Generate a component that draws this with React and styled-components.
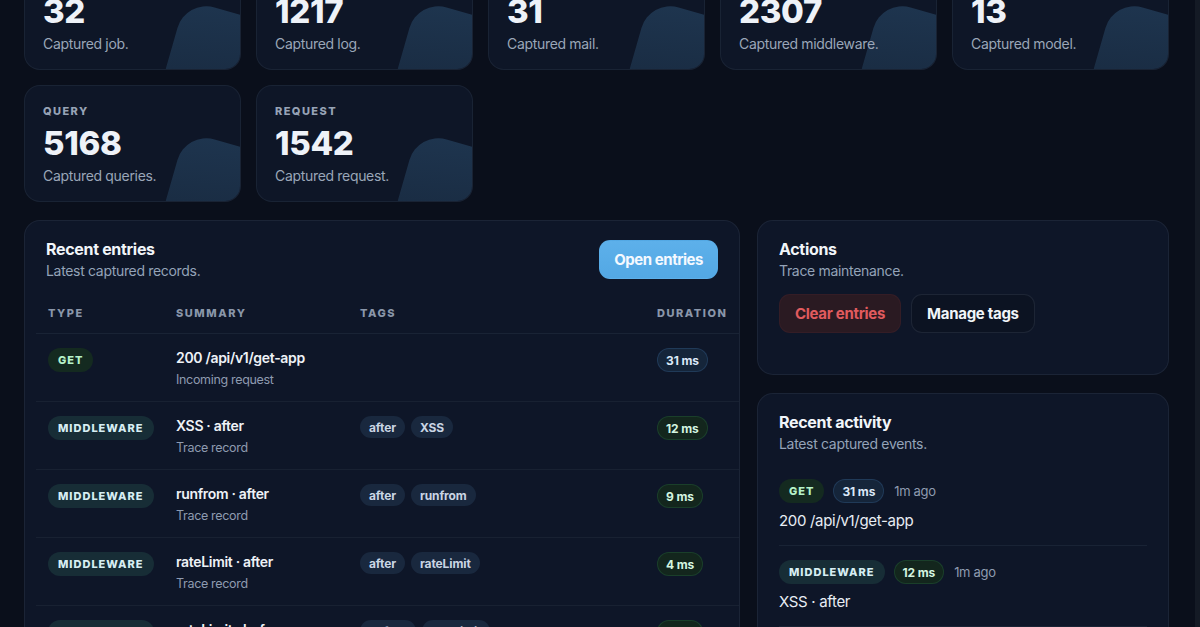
import React from "react";
import styled, { createGlobalStyle } from "styled-components";

const GlobalStyle = createGlobalStyle`
  html {
    margin: 0;
    overflow: hidden;
    background: linear-gradient(to left, #141a25 5px, #0a0f1b 5px);
  }
  body {
    margin: 0;
    overflow: hidden;
    background: transparent;
    font-family: Inter, "Noto Sans", sans-serif;
    letter-spacing: -0.02em;
    color: #e2e8f0;
  }
  * { box-sizing: border-box; }
`;

const Page = styled.div`
  display: flex;
  flex-direction: column;
  gap: 18px;
  padding: 0 31px 24px 24px;
  margin-top: -47px;
`;

const StatsGrid = styled.div`
  display: grid;
  grid-template-columns: repeat(5, minmax(0, 1fr));
  gap: 15px;
`;

const StatCard = styled.div`
  position: relative;
  overflow: hidden;
  padding: 17px 18px 15px;
  border-radius: 16px;
  background: #0e1627;
  border: 1px solid rgba(148, 163, 184, 0.09);
`;

const StatLabel = styled.div`
  font-size: 11px;
  font-weight: 800;
  letter-spacing: 0.13em;
  line-height: 16px;
  color: #97a3b6;
  margin-bottom: 4px;
  position: relative;
`;

const StatValue = styled.div`
  font-size: 33px;
  font-weight: 800;
  letter-spacing: -0.01em;
  line-height: 40px;
  color: #eef2f8;
  position: relative;
`;

const StatCaption = styled.div`
  margin-top: 3px;
  font-size: 14px;
  line-height: 20px;
  color: #9aa6b8;
  position: relative;
`;

const Blob = styled.span`
  position: absolute;
  right: -30px;
  bottom: -42px;
  width: 100px;
  height: 100px;
  border-radius: 30px;
  background: linear-gradient(170deg, #1e354f 0%, #1a2d44 60%, #172940 100%);
  transform: rotate(16deg);
`;

const MainGrid = styled.div`
  display: grid;
  grid-template-columns: minmax(0, 1fr) 412px;
  gap: 17px;
  align-items: start;
`;

const Panel = styled.section`
  background: #0e1628;
  border: 1px solid rgba(148, 163, 184, 0.1);
  border-radius: 16px;
  padding: ${(p) => p.$pad || "17px 21px 21px"};
  overflow: hidden;
`;

const PanelHeader = styled.div`
  display: flex;
  justify-content: space-between;
  align-items: flex-start;
  padding: ${(p) => p.$pad || "0"};
`;

const PanelTitle = styled.h2`
  margin: 0;
  font-size: 16px;
  font-weight: 700;
  line-height: 22px;
  color: #f1f5f9;
`;

const PanelSub = styled.p`
  margin: 1px 0 0;
  font-size: 14px;
  line-height: 20px;
  color: #94a3b8;
`;

const Button = styled.button`
  height: 39px;
  padding: 0 15px;
  border-radius: 11px;
  font-family: inherit;
  font-size: 15px;
  font-weight: 700;
  letter-spacing: -0.02em;
  cursor: pointer;
  border: 1px solid transparent;
  ${(p) =>
    p.$variant === "primary" &&
    `
    background: linear-gradient(180deg, #5db0ea, #53a8e4);
    color: #f4f9ff;
    margin-top: 2px;
    padding: 0 14px;
    letter-spacing: -0.03em;
  `}
  ${(p) =>
    p.$variant === "danger" &&
    `
    background: #2a1a22;
    color: #e15b5e;
    border-color: rgba(225, 91, 94, 0.06);
  `}
  ${(p) =>
    p.$variant === "ghost" &&
    `
    background: #0c1322;
    color: #f1f5f9;
    border-color: rgba(148, 163, 184, 0.13);
  `}
`;

const TableWrap = styled.div`
  padding-left: 11px;
  margin-top: 12px;
`;

const Table = styled.table`
  width: 100%;
  border-collapse: collapse;
  table-layout: fixed;
`;

const Th = styled.th`
  text-align: left;
  padding: 12px 12px;
  font-size: 11px;
  line-height: 16px;
  font-weight: 800;
  letter-spacing: 0.14em;
  color: #8a96aa;
  white-space: nowrap;
  border-bottom: 1px solid rgba(148, 163, 184, 0.09);
`;

const Tr = styled.tr`
  border-bottom: 1px solid rgba(148, 163, 184, 0.08);
`;

const Td = styled.td`
  vertical-align: top;
  padding: 14px 12px 12px;
`;

const TypeBadge = styled.span`
  display: inline-flex;
  align-items: center;
  height: 24px;
  padding: 0 10px;
  border-radius: 999px;
  font-size: 11px;
  font-weight: 800;
  letter-spacing: 0.09em;
  white-space: nowrap;
  background: ${(p) => (p.$kind === "get" ? "#142a20" : "#172d36")};
  color: ${(p) => (p.$kind === "get" ? "#b6f2c9" : "#d6eef3")};
`;

const EntryTitle = styled.div`
  font-size: 14px;
  font-weight: 600;
  line-height: 20px;
  color: #eef2f7;
  white-space: nowrap;
`;

const EntrySub = styled.div`
  margin-top: 3px;
  font-size: 12.5px;
  line-height: 18px;
  color: #8e9bb0;
`;

const Tags = styled.div`
  display: flex;
  gap: 6px;
`;

const Tag = styled.span`
  display: inline-flex;
  align-items: center;
  height: 22px;
  padding: 0 9px;
  border-radius: 999px;
  background: #19283e;
  color: #c9d5e4;
  font-size: 12px;
  font-weight: 700;
  letter-spacing: -0.01em;
`;

const Duration = styled.span`
  display: inline-flex;
  align-items: center;
  height: 24px;
  padding: 0 8px;
  border-radius: 999px;
  font-size: 12px;
  font-weight: 700;
  letter-spacing: -0.01em;
  white-space: nowrap;
  background: ${(p) => (p.$slow ? "#15253a" : "#13261d")};
  border: 1px solid
    ${(p) => (p.$slow ? "rgba(96, 165, 250, 0.16)" : "rgba(74, 222, 128, 0.14)")};
  color: ${(p) => (p.$slow ? "#dbe8f8" : "#d3f5e0")};
`;

const SideColumn = styled.div`
  display: flex;
  flex-direction: column;
  gap: 18px;
`;

const ButtonRow = styled.div`
  display: flex;
  gap: 10px;
  margin-top: 13px;
`;

const ActivityList = styled.div`
  margin-top: 11px;
`;

const ActivityItem = styled.div`
  padding: 14px 0 13px;
  border-bottom: 1px solid rgba(148, 163, 184, 0.09);
`;

const ActivityMeta = styled.div`
  display: flex;
  align-items: center;
  gap: 9px;
`;

const Ago = styled.span`
  font-size: 13px;
  color: #8e9bb0;
  margin-left: 1px;
`;

const ActivityText = styled.div`
  margin-top: 7px;
  font-size: 15px;
  line-height: 22px;
  color: #e8edf4;
`;

const stats = [
  { label: "JOB", value: "32", caption: "Captured job." },
  { label: "LOG", value: "1217", caption: "Captured log." },
  { label: "MAIL", value: "31", caption: "Captured mail." },
  { label: "MIDDLEWARE", value: "2307", caption: "Captured middleware." },
  { label: "MODEL", value: "13", caption: "Captured model." },
  { label: "QUERY", value: "5168", caption: "Captured queries." },
  { label: "REQUEST", value: "1542", caption: "Captured request." },
];

const entries = [
  { type: "GET", kind: "get", title: "200 /api/v1/get-app", sub: "Incoming request", tags: [], ms: 31 },
  { type: "MIDDLEWARE", kind: "mw", title: "XSS · after", sub: "Trace record", tags: ["after", "XSS"], ms: 12 },
  { type: "MIDDLEWARE", kind: "mw", title: "runfrom · after", sub: "Trace record", tags: ["after", "runfrom"], ms: 9 },
  { type: "MIDDLEWARE", kind: "mw", title: "rateLimit · after", sub: "Trace record", tags: ["after", "rateLimit"], ms: 4 },
  { type: "MIDDLEWARE", kind: "mw", title: "rateLimit · before", sub: "Trace record", tags: ["before", "rateLimit"], ms: 2 },
];

const activity = [
  { type: "GET", kind: "get", ms: 31, text: "200 /api/v1/get-app" },
  { type: "MIDDLEWARE", kind: "mw", ms: 12, text: "XSS · after" },
  { type: "MIDDLEWARE", kind: "mw", ms: 9, text: "runfrom · after" },
];

export default function App() {
  return (
    <>
      <GlobalStyle />
      <Page>
        <StatsGrid>
          {stats.map((s) => (
            <StatCard key={s.label}>
              <Blob />
              <StatLabel>{s.label}</StatLabel>
              <StatValue>{s.value}</StatValue>
              <StatCaption>{s.caption}</StatCaption>
            </StatCard>
          ))}
        </StatsGrid>

        <MainGrid>
          <Panel $pad="17px 0 0 0">
            <PanelHeader $pad="0 21px">
              <div>
                <PanelTitle>Recent entries</PanelTitle>
                <PanelSub>Latest captured records.</PanelSub>
              </div>
              <Button $variant="primary">Open entries</Button>
            </PanelHeader>
            <TableWrap>
              <Table>
                <colgroup>
                  <col style={{ width: 128 }} />
                  <col style={{ width: 184 }} />
                  <col />
                  <col style={{ width: 94 }} />
                </colgroup>
                <thead>
                  <tr>
                    <Th>TYPE</Th>
                    <Th>SUMMARY</Th>
                    <Th>TAGS</Th>
                    <Th>DURATION</Th>
                  </tr>
                </thead>
                <tbody>
                  {entries.map((e, i) => (
                    <Tr key={i}>
                      <Td>
                        <TypeBadge $kind={e.kind}>{e.type}</TypeBadge>
                      </Td>
                      <Td>
                        <EntryTitle>{e.title}</EntryTitle>
                        <EntrySub>{e.sub}</EntrySub>
                      </Td>
                      <Td>
                        <Tags>
                          {e.tags.map((t) => (
                            <Tag key={t}>{t}</Tag>
                          ))}
                        </Tags>
                      </Td>
                      <Td>
                        <Duration $slow={e.ms > 20}>{e.ms} ms</Duration>
                      </Td>
                    </Tr>
                  ))}
                </tbody>
              </Table>
            </TableWrap>
          </Panel>

          <SideColumn>
            <Panel $pad="17px 21px 41px">
              <PanelTitle>Actions</PanelTitle>
              <PanelSub>Trace maintenance.</PanelSub>
              <ButtonRow>
                <Button $variant="danger">Clear entries</Button>
                <Button $variant="ghost">Manage tags</Button>
              </ButtonRow>
            </Panel>
            <Panel>
              <PanelTitle>Recent activity</PanelTitle>
              <PanelSub>Latest captured events.</PanelSub>
              <ActivityList>
                {activity.map((a, i) => (
                  <ActivityItem key={i}>
                    <ActivityMeta>
                      <TypeBadge $kind={a.kind}>{a.type}</TypeBadge>
                      <Duration $slow={a.ms > 20}>{a.ms} ms</Duration>
                      <Ago>1m ago</Ago>
                    </ActivityMeta>
                    <ActivityText>{a.text}</ActivityText>
                  </ActivityItem>
                ))}
              </ActivityList>
            </Panel>
          </SideColumn>
        </MainGrid>
      </Page>
    </>
  );
}
